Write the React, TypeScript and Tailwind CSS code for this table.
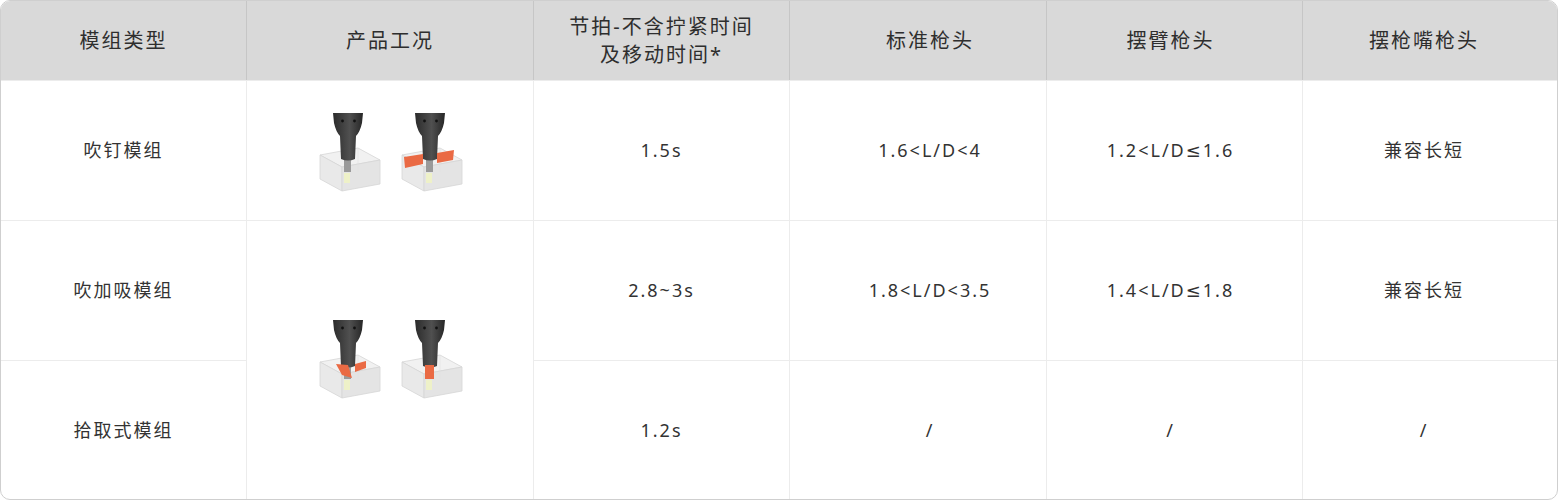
import type { ReactNode } from 'react'

const font = { fontFamily: '"Noto Sans", "DejaVu Sans", "Noto Sans CJK SC", sans-serif' }

// transparent block that the nozzle sits in
function Box() {
  return (
    <g>
      <polygon points="6,42 44,35 66,47 28,54" fill="#f1f1f1" stroke="#d6d6d6" strokeWidth="0.8" />
      <polygon points="6,42 28,54 28,78 6,66" fill="#e9e9e9" stroke="#d6d6d6" strokeWidth="0.8" />
      <polygon points="28,54 66,47 66,71 28,78" fill="#e4e4e4" stroke="#d6d6d6" strokeWidth="0.8" />
      <line x1="44" y1="35" x2="44" y2="59" stroke="#e0e0e0" strokeWidth="0.6" />
    </g>
  )
}

function Gun() {
  return (
    <g>
      <defs>
        <linearGradient id="gunG" x1="0" x2="1" y1="0" y2="0">
          <stop offset="0" stopColor="#2b2b2b" />
          <stop offset="0.55" stopColor="#505050" />
          <stop offset="1" stopColor="#262626" />
        </linearGradient>
      </defs>
      <rect x="30" y="44" width="7" height="15" fill="#9a9a9a" />
      <path d="M19 0 L49 0 L48 10 Q46 19 42 23 L41 46 Q34 49 27 46 L26 23 Q22 19 20 10 Z" fill="url(#gunG)" />
      <circle cx="28.5" cy="8" r="1.4" fill="#111" />
      <circle cx="40.5" cy="8" r="1.4" fill="#111" />
    </g>
  )
}

function Pic({ variant }: { variant: 'plain' | 'plate' | 'bent' | 'tip' }) {
  return (
    <svg width="70" height="80" viewBox="0 0 70 80">
      <Box />
      <rect x="30" y="60" width="6" height="10" fill="#eef2c4" opacity="0.9" />
      <Gun />
      {variant === 'plate' && (
        <>
          <polygon points="8,44 27,41 27,51 9,55" fill="#ea6a44" />
          <polygon points="41,40 58,37 57,47 41,50" fill="#ea6a44" />
        </>
      )}
      {variant === 'bent' && (
        <>
          <polygon points="22,44 34,45 38,58 28,55" fill="#ea6a44" />
          <polygon points="41,44 52,41 52,48 41,52" fill="#ea6a44" />
        </>
      )}
      {variant === 'tip' && <rect x="29" y="45" width="9" height="14" fill="#ea6a44" />}
    </svg>
  )
}

function Cell({ children, className = '' }: { children: ReactNode; className?: string }) {
  return <div className={`flex items-center justify-center text-center ${className}`}>{children}</div>
}

const body = 'border-t border-[#ececec] border-l text-[18px] tracking-[2px] text-[#333]'

export default function App() {
  return (
    <div className="p-0 bg-white" style={font}>
      <div className="w-[1558px] h-[500px] border border-[#cfcfcf] rounded-[10px] overflow-hidden grid grid-cols-[245px_287px_256px_257px_256px_1fr] grid-rows-[79px_140px_140px_139px]">
        {/* Header */}
        {[
          { t: '模组类型', c: '' },
          { t: '产品工况', c: 'border-l' },
          { t: '节拍-不含拧紧时间\n及移动时间*', c: 'border-l' },
          { t: '标准枪头', c: 'border-l pl-6' },
          { t: '摆臂枪头', c: 'border-l pr-2' },
          { t: '摆枪嘴枪头', c: 'border-l pr-3' },
        ].map(h => (
          <Cell key={h.t} className={`bg-[#d9d9d9] border-[#c6c6c6] text-[20px] leading-[28px] tracking-[2px] text-[#2e2e2e] whitespace-pre-line ${h.c}`}>
            {h.t}
          </Cell>
        ))}

        {/* Row 1 */}
        <Cell className="border-t border-[#ececec] text-[18px] tracking-[2px] text-[#333]">吹钉模组</Cell>
        <Cell className={`${body} gap-[12px] pt-[4px]`}>
          <Pic variant="plain" />
          <Pic variant="plate" />
        </Cell>
        <Cell className={body}>1.5s</Cell>
        <Cell className={`${body} pl-6`}>1.6&lt;L/D&lt;4</Cell>
        <Cell className={`${body} pr-2`}>1.2&lt;L/D≤1.6</Cell>
        <Cell className={`${body} pr-3`}>兼容长短</Cell>

        {/* Row 2 */}
        <Cell className="border-t border-[#ececec] text-[18px] tracking-[2px] text-[#333]">吹加吸模组</Cell>
        <Cell className={`${body} row-span-2 gap-[12px]`}>
          <Pic variant="bent" />
          <Pic variant="tip" />
        </Cell>
        <Cell className={body}>2.8~3s</Cell>
        <Cell className={`${body} pl-6`}>1.8&lt;L/D&lt;3.5</Cell>
        <Cell className={`${body} pr-2`}>1.4&lt;L/D≤1.8</Cell>
        <Cell className={`${body} pr-3`}>兼容长短</Cell>

        {/* Row 3 */}
        <Cell className="border-t border-[#ececec] text-[18px] tracking-[2px] text-[#333]">拾取式模组</Cell>
        <Cell className={body}>1.2s</Cell>
        <Cell className={`${body} pl-6`}>/</Cell>
        <Cell className={`${body} pr-2`}>/</Cell>
        <Cell className={`${body} pr-3`}>/</Cell>
      </div>
    </div>
  )
}
